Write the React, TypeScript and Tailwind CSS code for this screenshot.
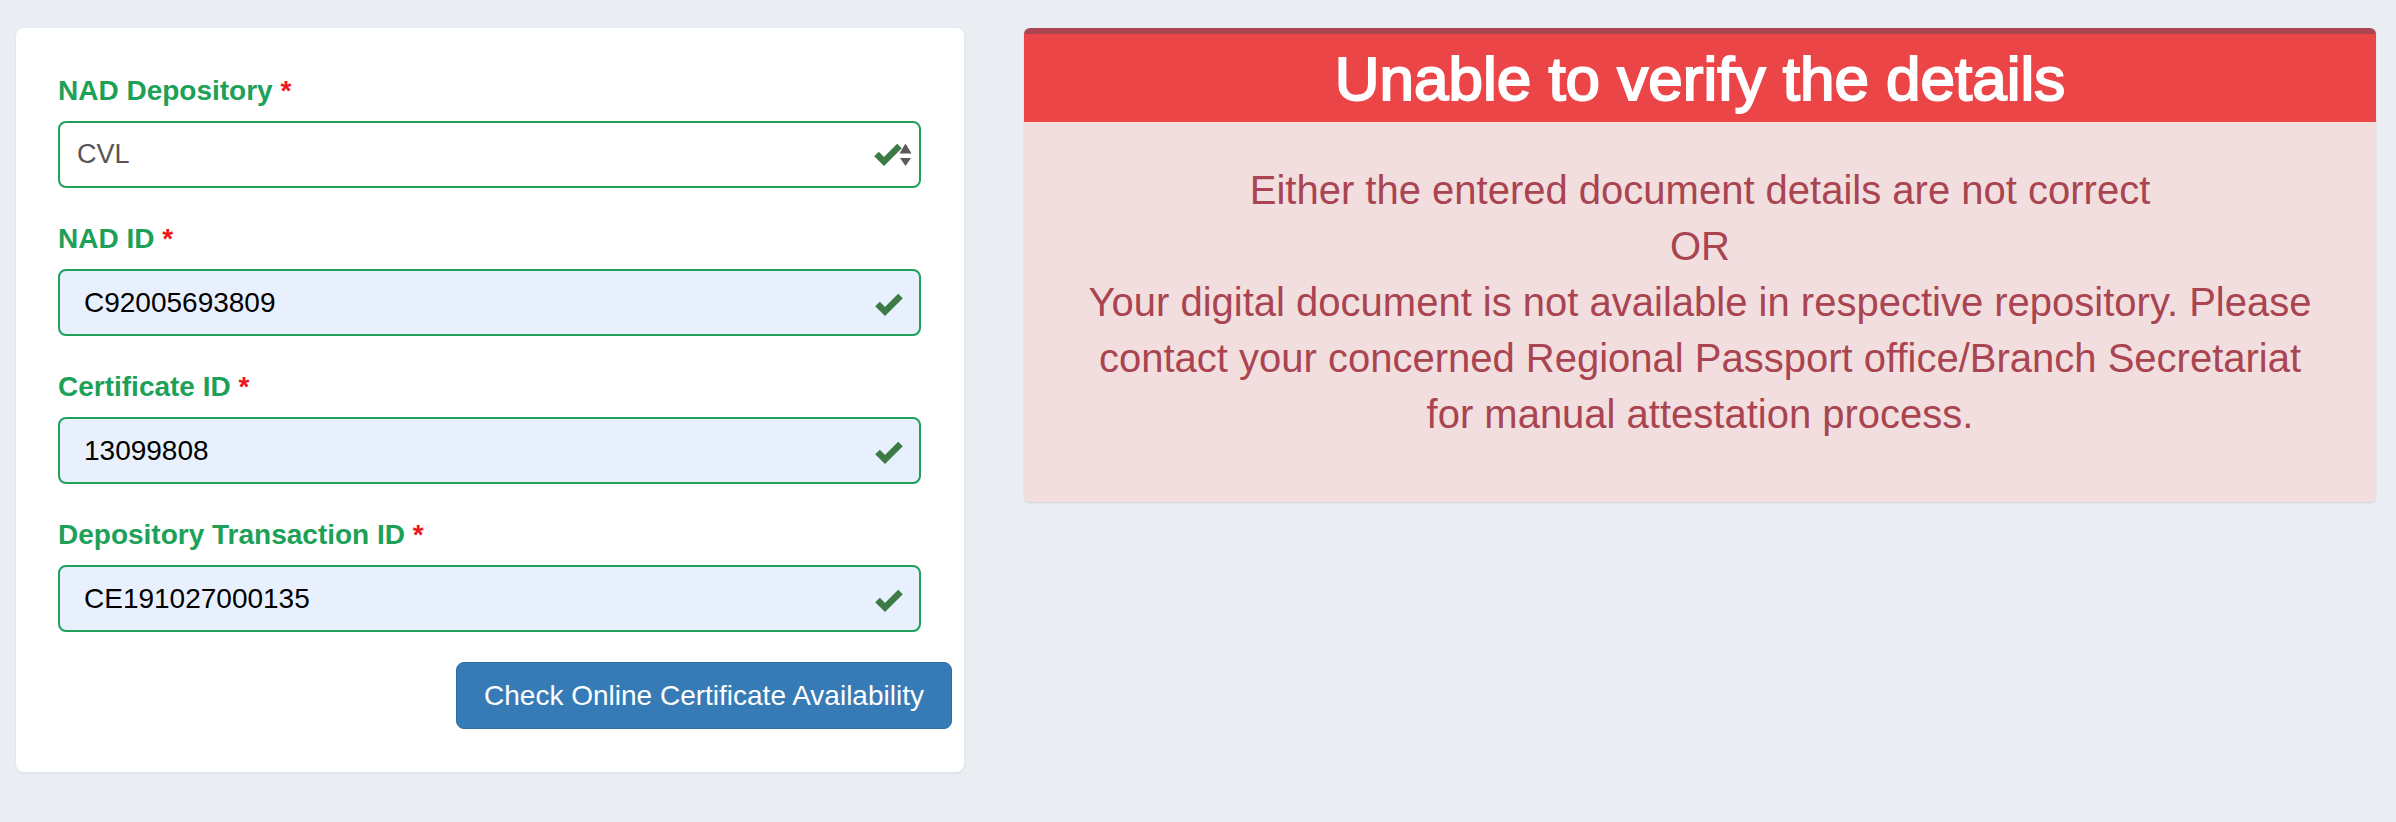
import React from "react";

function Check() {
  return (
    <svg width="28" height="24" viewBox="0 0 28 24" className="shrink-0">
      <polyline
        points="2.5,11 10,18.5 25.5,3"
        fill="none"
        stroke="#3d7a46"
        strokeWidth="6.5"
        strokeLinecap="butt"
        strokeLinejoin="miter"
      />
    </svg>
  );
}

function Arrows() {
  return (
    <svg width="13" height="24" viewBox="0 0 13 24" className="shrink-0 -ml-[3px]">
      <polygon points="0.5,10.5 6.5,0.5 12.5,10.5" fill="#5a5a5a" />
      <polygon points="1,15 12,15 6.5,23" fill="#5a5a5a" />
    </svg>
  );
}

function Label({ text }: { text: string }) {
  return (
    <div className="text-[28px] leading-[40px] font-bold text-[#1da158] mb-[10px]">
      {text} <span className="text-[#f2141c]">*</span>
    </div>
  );
}

function Field({ label, value }: { label: string; value: string }) {
  return (
    <div>
      <Label text={label} />
      <div className="h-[67px] rounded-[8px] border-2 border-[#1fa05b] bg-[#e8f0fe] flex items-center justify-between pl-[24px] pr-[16px]">
        <span className="text-[28px] text-black">{value}</span>
        <div className="mt-[4px]">
          <Check />
        </div>
      </div>
    </div>
  );
}

export default function App() {
  return (
    <div className="min-h-screen bg-[#eaeef3] font-['Liberation_Sans',Arial,sans-serif]">
      <div className="flex items-start gap-[60px] pl-[16px] pr-[20px] pt-[28px]">
        {/* Left form card */}
        <div className="w-[948px] shrink-0 bg-white rounded-[8px] shadow-[0_1px_3px_rgba(0,0,0,0.08)] px-[12px] pt-[43px] pb-[43px]">
          <div className="pl-[30px] pr-[31px] flex flex-col gap-[31px]">
            <div>
              <Label text="NAD Depository" />
              <div className="h-[67px] rounded-[8px] border-2 border-[#1fa05b] bg-white flex items-center justify-between pl-[17px] pr-[7px]">
                <span className="text-[27px] text-[#555555]">CVL</span>
                <div className="flex items-center">
                  <Check />
                  <Arrows />
                </div>
              </div>
            </div>
            <Field label="NAD ID" value="C92005693809" />
            <Field label="Certificate ID" value="13099808" />
            <Field label="Depository Transaction ID" value="CE191027000135" />
          </div>
          <div className="flex justify-end mt-[30px]">
            <button className="h-[67px] w-[496px] rounded-[8px] border border-[#2e6da4] bg-[#377bb6] text-white text-[28px] flex items-center justify-center">
              Check Online Certificate Availability
            </button>
          </div>
        </div>

        {/* Right error card */}
        <div className="flex-1 rounded-[6px] overflow-hidden shadow-[0_1px_2px_rgba(0,0,0,0.12)]">
          <div className="h-[6px] bg-[#a94450]" />
          <div className="h-[88px] bg-[#ec4547] text-center text-white text-[62px] leading-[86px] pt-[2px] [-webkit-text-stroke:2px_white]">
            Unable to verify the details
          </div>
          <div className="bg-[#f2dedf] text-[#a94450] text-center text-[40px] leading-[56px] pt-[40px] pb-[60px] px-[20px]">
            Either the entered document details are not correct
            <br />
            OR
            <br />
            Your digital document is not available in respective repository. Please
            <br />
            contact your concerned Regional Passport office/Branch Secretariat
            <br />
            for manual attestation process.
          </div>
        </div>
      </div>
    </div>
  );
}
